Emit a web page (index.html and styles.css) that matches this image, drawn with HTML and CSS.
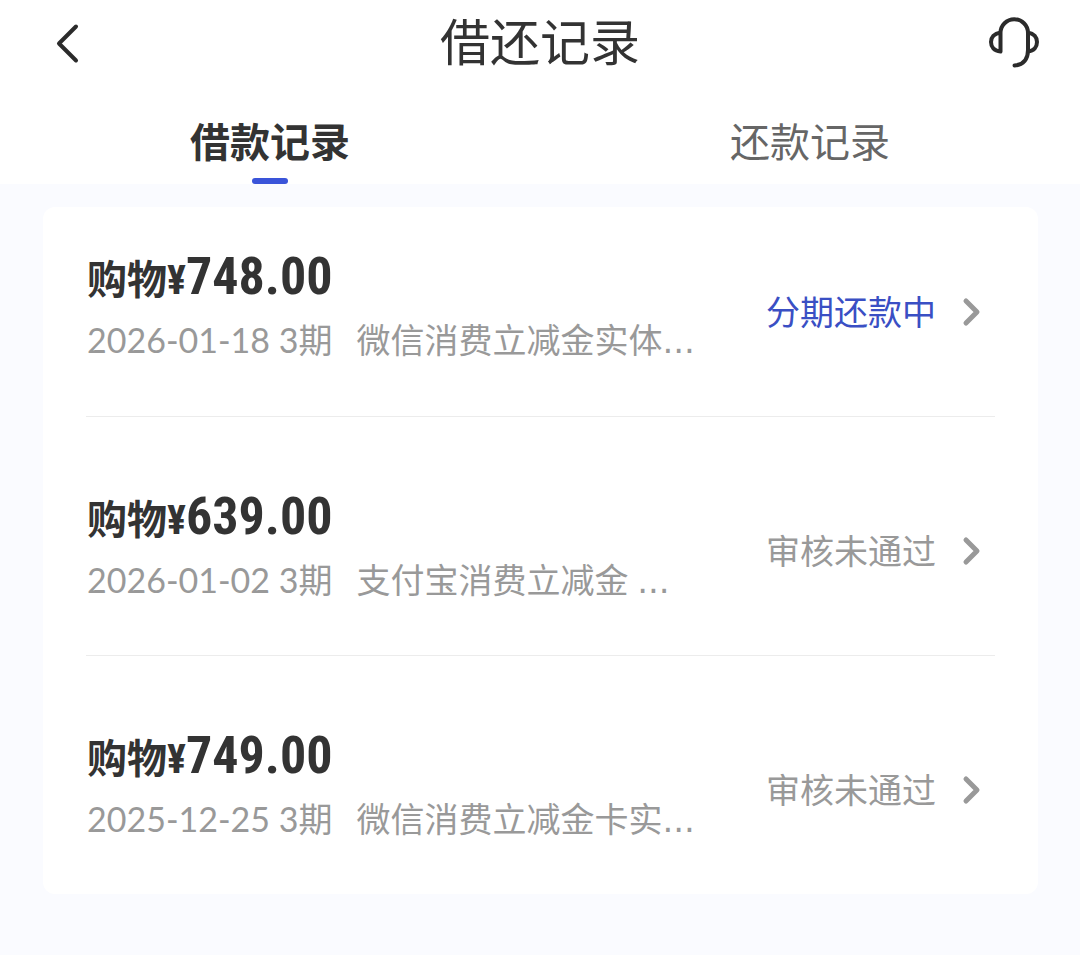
FILE: index.html
```html
<!DOCTYPE html>
<html lang="zh-CN">
<head>
<meta charset="utf-8">
<meta name="viewport" content="width=device-width, initial-scale=1">
<title>借还记录</title>
<link rel="stylesheet" href="styles.css">
</head>
<body>
<header class="top">
  <div class="bar">
    <button class="icon-button" type="button" aria-label="返回">
      <svg width="52" height="52" viewBox="0 0 52 52"><path d="M36 10.500 19 27.500 36 44.500"/></svg>
    </button>
    <h1 class="title">借还记录</h1>
    <button class="icon-button" type="button" aria-label="客服">
      <svg width="52" height="52" viewBox="0 0 52 52"><path d="M12.500 35.500V17A13.750 13.750 0 0 1 40 17V34C40 43 35.500 49 26.500 49.500M12.500 16.500C6 17.500 3 21.500 3 26C3 31 6 35 12.500 35.500M40 16.500C46 17.500 49 21.500 49 26C49 31 46 35 40 35.500"/></svg>
    </button>
  </div>
  <nav class="tabs">
    <a class="tab tab-active" href="#loans" aria-current="page">借款记录</a>
    <a class="tab" href="#repayments">还款记录</a>
  </nav>
</header>
<main class="content">
  <ul class="card" id="loans">
    <li><a class="record" href="#record-1">
      <div class="info">
        <div class="heading">购物¥<span class="amount">748.00</span></div>
        <div class="detail"><span>2026-01-18 3期</span><span>微信消费立减金实体<span class="dots">...</span></span></div>
      </div>
      <div class="status status-active">分期还款中</div>
      <svg class="chevron" width="20" height="32" viewBox="0 0 20 32"><path d="M4 5 15 16 4 27"/></svg>
    </a></li>
    <li><a class="record" href="#record-2">
      <div class="info">
        <div class="heading">购物¥<span class="amount">639.00</span></div>
        <div class="detail"><span>2026-01-02 3期</span><span>支付宝消费立减金 <span class="dots">...</span></span></div>
      </div>
      <div class="status">审核未通过</div>
      <svg class="chevron" width="20" height="32" viewBox="0 0 20 32"><path d="M4 5 15 16 4 27"/></svg>
    </a></li>
    <li><a class="record" href="#record-3">
      <div class="info">
        <div class="heading">购物¥<span class="amount">749.00</span></div>
        <div class="detail"><span>2025-12-25 3期</span><span>微信消费立减金卡实<span class="dots">...</span></span></div>
      </div>
      <div class="status">审核未通过</div>
      <svg class="chevron" width="20" height="32" viewBox="0 0 20 32"><path d="M4 5 15 16 4 27"/></svg>
    </a></li>
  </ul>
</main>
</body>
</html>
```
FILE: styles.css
```css
* {
  box-sizing: border-box;
}

body {
  margin: 0;
  min-height: 100vh;
  background: #fafbff;
  color: #333;
  font-family: Lato, "Noto Sans CJK SC", sans-serif;
}

a {
  color: inherit;
  text-decoration: none;
}

svg {
  display: block;
  fill: none;
  stroke: currentColor;
  stroke-linecap: round;
  stroke-linejoin: round;
}

.top {
  background: #fff;
}

.bar {
  display: flex;
  align-items: center;
  justify-content: space-between;
  height: 84px;
  padding: 0 40px;
}

.icon-button {
  padding: 0;
  border: 0;
  background: none;
  color: #2b2b2b;
  stroke-width: 4px;
}

.title {
  margin: 0;
  font-size: 50px;
  font-weight: 400;
  line-height: 84px;
}

.tabs {
  display: grid;
  grid-template-columns: 1fr 1fr;
  height: 100px;
}

.tab {
  display: flex;
  flex-direction: column;
  align-items: center;
  justify-content: flex-end;
  padding-bottom: 12px;
  color: #666;
  font-size: 40px;
  line-height: 60px;
}

.tab-active {
  padding-bottom: 0;
  color: #333;
  font-weight: 700;
}

.tab-active::after {
  content: "";
  width: 36px;
  height: 6px;
  margin-top: 6px;
  border-radius: 3px;
  background: #3a54d9;
}

.content {
  padding: 23px 42px 60px 43px;
}

.card {
  margin: 0;
  padding: 0 43px;
  border-radius: 12px;
  background: #fff;
  list-style: none;
}

.card li + li {
  border-top: 1px solid #ececec;
}

.record {
  display: flex;
  align-items: center;
  height: 238px;
  padding: 30px 13px 0 1px;
}

.card li:first-child .record {
  height: 209px;
  padding-top: 0;
}

.info {
  flex: 1;
  padding-bottom: 10px;
}

.heading {
  font-family: "Roboto Condensed", "Noto Sans CJK SC", sans-serif;
  font-size: 40px;
  font-weight: 700;
  line-height: 60px;
}

.amount {
  font-size: 52px;
}

.detail {
  display: flex;
  gap: 24px;
  margin-top: 4px;
  color: #999;
  font-size: 34px;
  line-height: 50px;
  white-space: nowrap;
}

.dots {
  font-family: "DejaVu Sans", sans-serif;
}

.status {
  margin-right: 26px;
  color: #999;
  font-size: 34px;
  line-height: 50px;
}

.status-active {
  color: #3a4fc4;
}

.chevron {
  color: #999;
  stroke-width: 5px;
}
```
